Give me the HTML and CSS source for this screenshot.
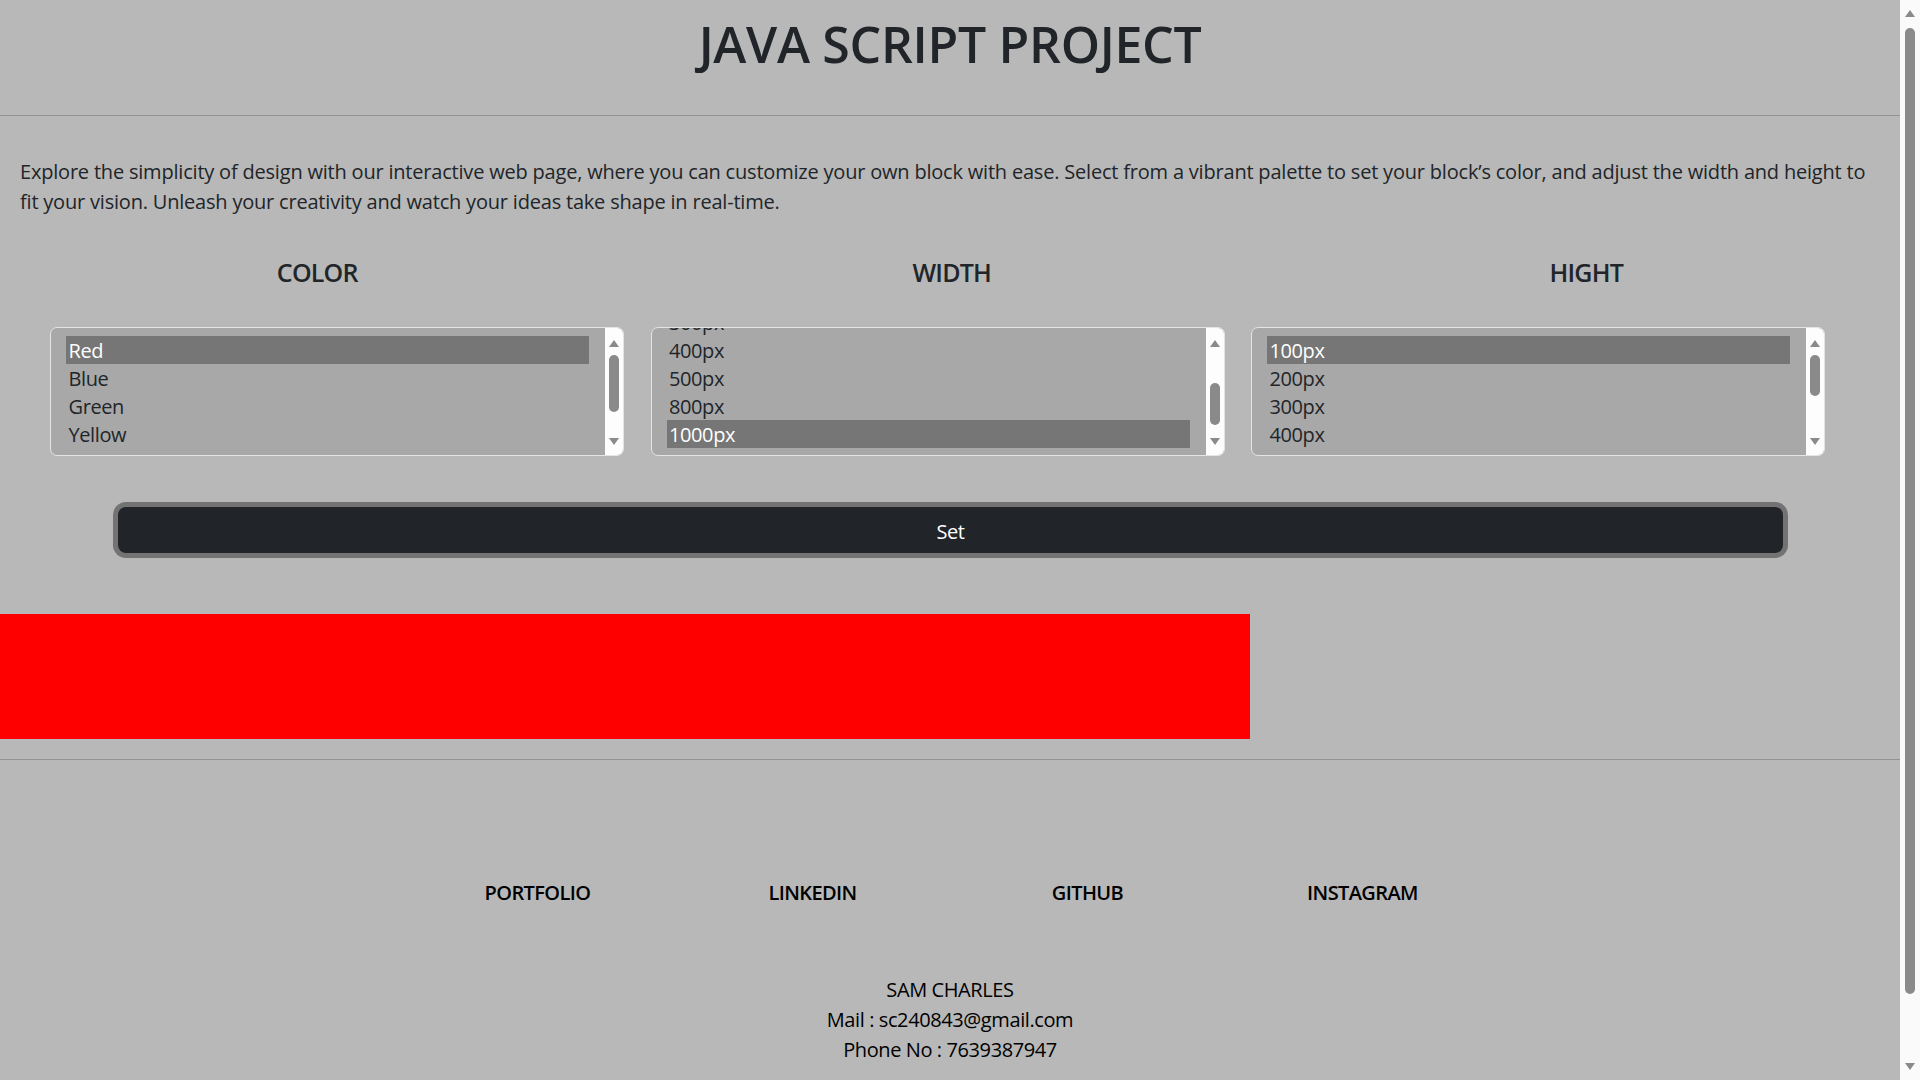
FILE: index.html
```html
<!DOCTYPE html>
<html lang="en">
<head>
<meta charset="utf-8">
<title>JAVA SCRIPT PROJECT</title>
<link rel="stylesheet" href="styles.css">
</head>
<body>
<div class="window">
  <div class="page">
    <header class="top">
      <h1 class="title">JAVA SCRIPT PROJECT</h1>
    </header>
    <hr class="rule">
    <p class="intro">Explore the simplicity of design with our interactive web page, where you can customize your own block with ease. Select from a vibrant palette to set your block’s color, and adjust the width and height to fit your vision. Unleash your creativity and watch your ideas take shape in real-time.</p>

    <div class="labels">
      <h5 class="label">COLOR</h5>
      <h5 class="label">WIDTH</h5>
      <h5 class="label">HIGHT</h5>
    </div>

    <div class="pickers">
      <div class="listbox" role="listbox" aria-label="Color">
        <div class="options">
          <div class="opt-list">
            <div class="opt selected">Red</div>
            <div class="opt">Blue</div>
            <div class="opt">Green</div>
            <div class="opt">Yellow</div>
          </div>
        </div>
        <div class="lb-scroll">
          <span class="lb-up"></span>
          <span class="lb-thumb" style="margin-top:8px;height:57px"></span>
          <span class="lb-down"></span>
        </div>
      </div>

      <div class="listbox" role="listbox" aria-label="Width">
        <div class="options">
          <div class="opt-list" style="margin-top:-28px">
            <div class="opt">300px</div>
            <div class="opt">400px</div>
            <div class="opt">500px</div>
            <div class="opt">800px</div>
            <div class="opt selected">1000px</div>
          </div>
        </div>
        <div class="lb-scroll">
          <span class="lb-up"></span>
          <span class="lb-thumb" style="margin-top:36px;height:42px"></span>
          <span class="lb-down"></span>
        </div>
      </div>

      <div class="listbox" role="listbox" aria-label="Height">
        <div class="options">
          <div class="opt-list">
            <div class="opt selected">100px</div>
            <div class="opt">200px</div>
            <div class="opt">300px</div>
            <div class="opt">400px</div>
          </div>
        </div>
        <div class="lb-scroll">
          <span class="lb-up"></span>
          <span class="lb-thumb" style="margin-top:8px;height:41px"></span>
          <span class="lb-down"></span>
        </div>
      </div>
    </div>

    <div class="set-row">
      <button class="set-btn" type="button">Set</button>
    </div>

    <div class="block" style="width:1250px;height:125px;background:#ff0000"></div>

    <hr class="rule rule-bottom">

    <footer class="foot">
      <ul class="links">
        <li class="link">PORTFOLIO</li>
        <li class="link">LINKEDIN</li>
        <li class="link">GITHUB</li>
        <li class="link">INSTAGRAM</li>
      </ul>
      <div class="contact">
        <p class="contact-line">SAM CHARLES</p>
        <p class="contact-line">Mail : sc240843@gmail.com</p>
        <p class="contact-line">Phone No : 7639387947</p>
      </div>
    </footer>
  </div>

  <div class="vscroll" aria-hidden="true">
    <span class="vs-up"></span>
    <span class="vs-thumb"></span>
    <span class="vs-down"></span>
  </div>
</div>
</body>
</html>
```

FILE: styles.css
```css
* {
  box-sizing: border-box;
}

html, body {
  margin: 0;
  padding: 0;
  height: 100%;
  overflow: hidden;
}

body {
  background: #b8b8b8;
  color: #212529;
  font-family: "Open Sans", "Noto Sans", "Liberation Sans", sans-serif;
  font-size: 20px;
  line-height: 30px;
}

.window {
  display: flex;
  height: 1080px;
  overflow: hidden;
}

.page {
  flex: 1;
  min-width: 0;
  overflow: hidden;
}

/* header */
.top {
  padding: 14px 0 41px;
  text-align: center;
}

.title {
  margin: 0;
  font-size: 50px;
  line-height: 60px;
  font-weight: 600;
  letter-spacing: -0.3px;
}

.rule {
  margin: 0;
  height: 0;
  border: 0;
  border-top: 1px solid #939393;
}

.intro {
  margin: 41px 0 0;
  padding: 0 20px;
  letter-spacing: -0.2px;
}

/* labels */
.labels {
  display: grid;
  grid-template-columns: repeat(3, 634.5px);
  margin-top: 40px;
}

.label {
  margin: 0;
  text-align: center;
  font-size: 25px;
  line-height: 30px;
  font-weight: 600;
  letter-spacing: -0.8px;
}

/* list boxes */
.pickers {
  display: grid;
  grid-template-columns: repeat(3, 574px);
  column-gap: 26.5px;
  padding-left: 50px;
  margin-top: 40px;
}

.listbox {
  display: flex;
  height: 129px;
  background: #a8a8a8;
  border: 1px solid #e2e4e7;
  border-radius: 7px;
  overflow: hidden;
}

.options {
  flex: 1;
  min-width: 0;
  overflow: hidden;
  padding: 8px 16px 7px 15px;
}

.opt {
  height: 28px;
  line-height: 28px;
  padding: 1px 2.5px 0;
  font-size: 20px;
  letter-spacing: -0.4px;
  color: #212529;
  white-space: nowrap;
}

.opt.selected {
  background: #767676;
  color: #ffffff;
}

.lb-scroll {
  width: 18px;
  flex: none;
  background: #fdfdfd;
  display: flex;
  flex-direction: column;
  align-items: center;
  padding-top: 12px;
}

.lb-up,
.lb-down,
.vs-up,
.vs-down {
  width: 0;
  height: 0;
  border-left: 5.5px solid transparent;
  border-right: 5.5px solid transparent;
  flex: none;
}

.lb-up,
.vs-up {
  border-bottom: 7px solid #8a8a8a;
}

.lb-down,
.vs-down {
  border-top: 7px solid #8a8a8a;
}

.lb-thumb {
  display: block;
  width: 10px;
  background: #8a8a8a;
  border-radius: 5px;
  flex: none;
}

.lb-down {
  margin-top: auto;
  margin-bottom: 10px;
}

/* button */
.set-row {
  padding: 0 117px 0 118px;
  margin-top: 51px;
}

.set-btn {
  display: block;
  width: 100%;
  height: 46px;
  background: #212529;
  color: #ffffff;
  border: 0;
  border-radius: 8px;
  box-shadow: 0 0 0 5px #737373;
  font-family: inherit;
  font-size: 20px;
  line-height: 30px;
  letter-spacing: -0.4px;
  padding: 4px 0 0;
}

/* block */
.block {
  margin-top: 61px;
}

.rule-bottom {
  margin-top: 20px;
}

/* footer */
.foot {
  padding-bottom: 90px;
}

.links {
  list-style: none;
  margin: 118px 0 0;
  padding: 0;
  display: grid;
  grid-template-columns: repeat(4, 275px);
  justify-content: center;
}

.link {
  text-align: center;
  font-size: 20px;
  line-height: 30px;
  font-weight: 600;
  color: #000000;
  letter-spacing: -0.6px;
}

.contact {
  margin-top: 67px;
  text-align: center;
  color: #000000;
}

.contact-line {
  margin: 0;
  letter-spacing: -0.4px;
}

/* page scrollbar */
.vscroll {
  width: 20px;
  flex: none;
  background: #fafafa;
  display: flex;
  flex-direction: column;
  align-items: center;
  padding-top: 10px;
}

.vs-thumb {
  display: block;
  width: 10px;
  height: 966px;
  margin-top: 11px;
  background: #8a8a8a;
  border-radius: 5px;
}

.vs-down {
  margin-top: auto;
  margin-bottom: 10px;
}
```
